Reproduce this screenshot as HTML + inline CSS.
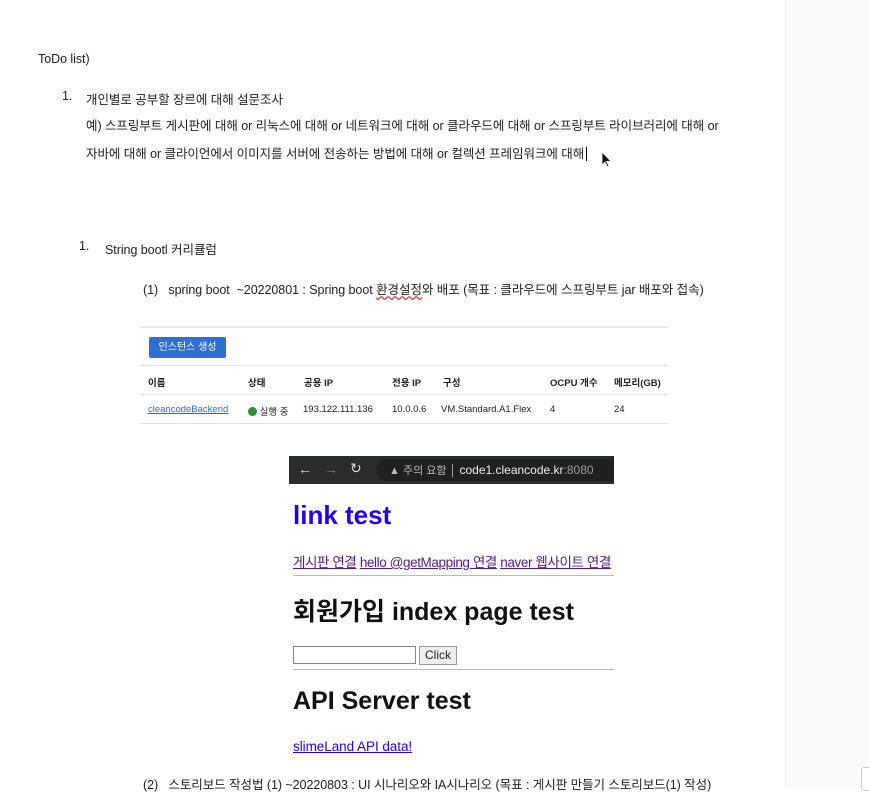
<!DOCTYPE html>
<html><head><meta charset="utf-8"><style>
body{margin:0;width:869px;height:787px;overflow:hidden;background:#fff;font-family:"Liberation Sans","Noto Sans CJK KR",sans-serif;color:#222;position:relative}
.t{position:absolute;white-space:nowrap;font-size:12.5px;letter-spacing:-0.05px}
.side{position:absolute;left:785px;top:0;width:84px;height:787px;background:#f8f9fa;border-left:1px solid #eceef0}
.ss{position:absolute;left:140px;top:326px;width:528px;height:100px;background:#fff;border-top:2px solid #e4e6e8}
.ss .btn{position:absolute;left:9px;top:9px;width:77px;height:21px;background:#2f6fd1;border-radius:2px;color:#fff;font-size:10px;line-height:21px;text-align:center}
.ss .row{position:absolute;left:0;width:528px;height:28px;font-size:9.5px;border-top:1px solid #e0e0e0}
.ss .row span{position:absolute;top:9px}
.br{position:absolute;left:289px;top:456px;width:325px;height:28px;background:#2b2c2e;color:#ddd}
.h{position:absolute;font-weight:bold;white-space:nowrap;font-family:"Liberation Sans","Noto Sans CJK KR",sans-serif}
a{color:#551a8b;text-decoration:underline}
</style></head><body>
<div class="side"></div>
<div class="t" style="left:38px;top:52px">ToDo list)</div>
<div class="t" style="left:62px;top:89px">1.</div>
<div class="t" style="left:86px;top:89px">개인별로 공부할 장르에 대해 설문조사</div>
<div class="t" style="left:86px;top:115px">예) 스프링부트 게시판에 대해 or 리눅스에 대해 or 네트워크에 대해 or 클라우드에 대해 or 스프링부트 라이브러리에 대해 or</div>
<div class="t" style="left:86px;top:143px">자바에 대해 or 클라이언에서 이미지를 서버에 전송하는 방법에 대해 or 컬렉션 프레임워크에 대해<span style="border-left:1.5px solid #000;margin-left:2px"></span></div>
<svg style="position:absolute;left:601px;top:151px" width="11" height="17" viewBox="0 0 11 17"><path d="M1 1 L1 14 L4 11 L6.5 16 L8 15.3 L5.6 10.4 L10 10.4 Z" fill="#111" stroke="#fff" stroke-width="0.8"/></svg>
<div class="t" style="left:79px;top:239px">1.</div>
<div class="t" style="left:105px;top:239px">String bootl 커리큘럼</div>
<div class="t" style="left:143px;top:279px">(1)&nbsp;&nbsp;&nbsp;spring boot&nbsp;&nbsp;~20220801 : Spring boot <span style="text-decoration:underline wavy #d33">환경설정</span>와 배포 (목표 : 클라우드에 스프링부트 jar 배포와 접속)</div>
<div class="ss">
<div class="btn">인스턴스 생성</div>
<div class="row" style="top:37px;font-weight:bold"><span style="left:8px">이름</span><span style="left:108px">상태</span><span style="left:164px">공용 IP</span><span style="left:252px">전용 IP</span><span style="left:303px">구성</span><span style="left:410px">OCPU 개수</span><span style="left:474px">메모리(GB)</span></div>
<div class="row" style="top:66px"><span style="left:8px;color:#2a6bc9;text-decoration:underline">cleancodeBackend</span><span style="left:108px"><b style="display:inline-block;width:9px;height:9px;border-radius:50%;background:#2e8b3a;vertical-align:-1px"></b> 실행 중</span><span style="left:163px">193.122.111.136</span><span style="left:252px">10.0.0.6</span><span style="left:301px">VM.Standard.A1.Flex</span><span style="left:410px">4</span><span style="left:474px">24</span></div>
<div class="row" style="top:95px;height:0"></div>
</div>
<div class="br">
<span style="position:absolute;left:9px;top:5px;font-size:14px">&larr;</span>
<span style="position:absolute;left:35px;top:5px;font-size:14px;color:#777">&rarr;</span>
<span style="position:absolute;left:61px;top:4px;font-size:14px">&#x21BB;</span>
<div style="position:absolute;left:87px;top:3px;width:238px;height:22px;background:#1f2022;border-radius:11px 0 0 11px"></div>
<span style="position:absolute;left:100px;top:6px;font-size:11px;color:#bbb">▲ 주의 요함 │ <span style="color:#eee;font-size:12px">code1.cleancode.kr</span><span style="color:#999;font-size:12px">:8080</span></span>
</div>
<div class="h" style="left:293px;top:500px;font-size:26px;color:#2200ee">link test</div>
<div class="t" style="left:293px;top:551px;font-size:13.5px;letter-spacing:-0.4px"><a>게시판 연결</a> <a>hello @getMapping 연결</a> <a>naver 웹사이트 연결</a></div>
<div style="position:absolute;left:293px;top:575px;width:321px;height:1px;background:#bbb"></div>
<div class="h" style="left:293px;top:592px;font-size:25px;color:#111">회원가입 index page test</div>
<div style="position:absolute;left:293px;top:646px;width:121px;height:16px;border:1px solid #888"></div>
<div style="position:absolute;left:419px;top:646px;width:36px;height:17px;border:1px solid #999;background:#eee;font-size:12px;text-align:center;line-height:17px">Click</div>
<div style="position:absolute;left:293px;top:669px;width:321px;height:1px;background:#bbb"></div>
<div class="h" style="left:293px;top:687px;font-size:25px;color:#111">API Server test</div>
<div class="t" style="left:293px;top:739px;font-size:13.5px"><a style="color:#2200ee">slimeLand API data!</a></div>
<div class="t" style="left:143px;top:774px">(2)&nbsp;&nbsp;&nbsp;스토리보드 작성법 (1) ~20220803 : UI 시나리오와 IA시나리오 (목표 : 게시판 만들기 스토리보드(1) 작성)</div>
<div style="position:absolute;left:861px;top:767px;width:10px;height:22px;border:1px solid #ccc;border-radius:3px;background:#fff"></div>
</body></html>
